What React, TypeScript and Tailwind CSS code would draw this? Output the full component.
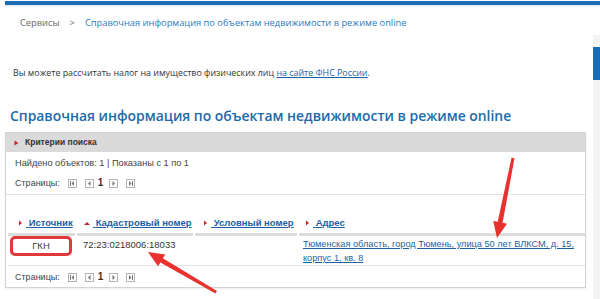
function PagerBox({ kind }: { kind: "first" | "prev" | "next" | "last" }) {
  return (
    <span className="inline-flex h-[9px] w-[9px] items-center justify-center border border-[#b5b5b5] bg-white">
      <svg width="7" height="7" viewBox="0 0 7 7">
        {kind === "first" && (
          <>
            <rect x="1" y="1" width="1" height="5" fill="#777" />
            <polygon points="5,1 2.5,3.5 5,6" fill="#777" />
          </>
        )}
        {kind === "prev" && <polygon points="4.5,1 2,3.5 4.5,6" fill="#777" />}
        {kind === "next" && <polygon points="2.5,1 5,3.5 2.5,6" fill="#777" />}
        {kind === "last" && (
          <>
            <polygon points="2,1 4.5,3.5 2,6" fill="#777" />
            <rect x="5" y="1" width="1" height="5" fill="#777" />
          </>
        )}
      </svg>
    </span>
  );
}

function Pager() {
  return (
    <div className="flex items-center text-[9px] leading-[14px] text-[#444]">
      <span>Страницы:</span>
      <span className="ml-[8px] flex items-center gap-[8px]">
        <PagerBox kind="first" />
        <PagerBox kind="prev" />
      </span>
      <span className="ml-[4px] mr-[6px] text-[10px] font-bold text-[#333]">1</span>
      <span className="flex items-center gap-[8px]">
        <PagerBox kind="next" />
        <PagerBox kind="last" />
      </span>
    </div>
  );
}

function SortHead({ label, up, pad }: { label: string; up?: boolean; pad: string }) {
  return (
    <div className={`${pad} flex items-center whitespace-nowrap border-b-[3px] border-[#dcdcdc] pb-[3px] text-[9.5px] leading-[14px]`}>
      {up ? (
        <svg width="6" height="5" viewBox="0 0 6 5" className="mr-[3px]">
          <polygon points="0,4 3,1 6,4" fill="#c62828" />
        </svg>
      ) : (
        <svg width="5" height="6" viewBox="0 0 5 6" className="mr-[3px]">
          <polygon points="1,0.5 4,3 1,5.5" fill="#c62828" />
        </svg>
      )}
      <a className="font-bold text-[#1c5fa5] underline">&nbsp;{label}</a>
    </div>
  );
}

export default function App() {
  return (
    <div className="relative h-[299px] w-[600px] overflow-hidden bg-white font-['Open_Sans',sans-serif]">
      <div className="ml-[5px] mt-[1px] h-[4px] bg-[#1a6db3]" />
      <div className="ml-[5px] h-[2px] bg-[#e9f2f9]" />

      <div className="flex">
        <div className="w-[593px]">
          <div className="pl-[20px] pt-[8px] text-[9.3px] leading-[15px] text-[#666]">
            Сервисы<span className="mx-[10px]">&gt;</span>
            <span className="text-[#2a7bc0]">Справочная информация по объектам недвижимости в режиме online</span>
          </div>

          <p className="mt-[35px] pl-[13px] text-[8.9px] leading-[15px] text-[#333]">
            Вы можете рассчитать налог на имущество физических лиц{" "}
            <a className="text-[#1c5fa5] underline">на сайте ФНС России</a>.
          </p>

          <h1 className="mt-[26px] pl-[10px] text-[13.9px] font-semibold leading-[20px] text-[#1d6aa8]">
            Справочная информация по объектам недвижимости в режиме online
          </h1>

          <div className="ml-[5px] mt-[6px] w-[581px] border border-[#d4d4d4] font-['Liberation_Sans',Arial,sans-serif] shadow-[0_1px_2px_rgba(0,0,0,0.08)]">
            <div className="flex h-[19px] items-center bg-[#dadada] pl-[8px] text-[8.5px] font-bold text-[#333]">
              <svg width="5" height="6" viewBox="0 0 5 6" className="mr-[6px]">
                <polygon points="0.5,0.5 4.5,3 0.5,5.5" fill="#c62828" />
              </svg>
              Критерии поиска
            </div>

            <div className="border-b border-[#e2e2e2] px-[9px] pb-[4px] pt-[4px]">
              <div className="text-[9.2px] leading-[14px] text-[#444]">Найдено объектов: 1 | Показаны с 1 по 1</div>
              <div className="mt-[6px]">
                <Pager />
              </div>
            </div>

            <div className="ml-[2px] grid grid-cols-[67px_116px_102px_1fr] gap-x-[2px] pt-[21px]">
              <SortHead label="Источник" pad="pl-[10px]" />
              <SortHead label="Кадастровый номер" up pad="pl-[7px]" />
              <SortHead label="Условный номер" pad="pl-[8px]" />
              <SortHead label="Адрес" pad="pl-[6px]" />
            </div>

            <div className="ml-[2px] grid grid-cols-[67px_116px_102px_1fr] gap-x-[2px] border-b border-[#e2e2e2] text-[9.5px] leading-[14px] text-[#333]">
              <div>
                <div className="ml-[2px] flex h-[20px] w-[62px] items-center justify-center rounded-[5px] border-[3px] border-[#e0383b] text-[#444]">
                  ГКН
                </div>
              </div>
              <div className="pl-[6px] pt-[2px]">72:23:0218006:18033</div>
              <div />
              <div className="pl-[4px] pt-[1px] text-[9.2px]">
                <a className="text-[#1c5fa5] underline">
                  Тюменская область, город Тюмень, улица 50 лет ВЛКСМ, д. 15, корпус 1, кв. 8
                </a>
              </div>
            </div>

            <div className="px-[9px] pb-[3px] pt-[4px]">
              <Pager />
            </div>
          </div>
        </div>

        <div className="mt-[28px] h-[300px] flex-1 bg-[#f4f4f4]">
          <div className="mt-[12px] h-[33px] bg-[#1a6db3]" />
        </div>
      </div>

      <svg className="pointer-events-none absolute left-0 top-0" width="600" height="299" viewBox="0 0 600 299">
        <polygon
          points="148,252 165.3,254.4 162.9,258.2 217,291 215.5,293.5 160.4,262.5 158,266.3"
          fill="#e8322f"
        />
        <polygon
          points="497,238 507,223.7 502.6,222.8 514.5,158.3 511.5,157.7 497.7,221.8 493.2,220.9"
          fill="#e8322f"
        />
      </svg>
    </div>
  );
}
